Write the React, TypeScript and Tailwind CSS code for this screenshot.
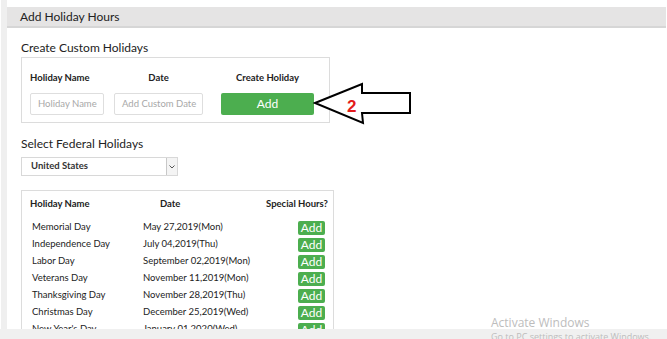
import React from "react";

const font = { fontFamily: "Lato, 'Noto Sans', sans-serif" };

const holidays = [
  { name: "Memorial Day", date: "May 27,2019(Mon)" },
  { name: "Independence Day", date: "July 04,2019(Thu)" },
  { name: "Labor Day", date: "September 02,2019(Mon)" },
  { name: "Veterans Day", date: "November 11,2019(Mon)" },
  { name: "Thanksgiving Day", date: "November 28,2019(Thu)" },
  { name: "Christmas Day", date: "December 25,2019(Wed)" },
  { name: "New Year's Day", date: "January 01,2020(Wed)" },
];

// callout arrow pointing at the Add button
const Arrow = () => (
  <svg width="100" height="44" viewBox="0 0 100 44" className="absolute left-[313px] top-[82px]">
    <path
      d="M2 21 L49 2 L49 11 L97 11 L97 31 L49 31 L50 41 Z"
      fill="white"
      stroke="black"
      strokeWidth="2"
    />
    <text x="34" y="30" fill="#e31b1b" fontSize="17" fontWeight="700" fontFamily="Liberation Sans, Arial, sans-serif">
      2
    </text>
  </svg>
);

export default function App() {
  return (
    <div className="relative w-[667px] h-[339px] overflow-hidden bg-white text-[#222]" style={font}>
      <div className="flex h-[329px]">
        <div className="w-[6px] shrink-0 bg-[#efefef] ml-[1px]" />
        <div className="flex-1 overflow-hidden pt-[7px]">
          <div className="h-[21px] w-[659px] bg-[#e5e4e4] border-b-2 border-[#d6d6d6] flex items-center pl-[13px] pt-[1px] text-[12px]">
            Add Holiday Hours
          </div>

          <div className="pl-[14px]">
            <div className="mt-[12px] text-[12px] leading-[15px]">Create Custom Holidays</div>
            <div className="mt-[2px] w-[309px] h-[66px] border border-[#dcdcdc] pl-[8px] pt-[13px]">
              <div className="flex gap-[10px] text-[9.5px] font-bold text-[#222]">
                <div className="w-[74px]">Holiday Name</div>
                <div className="w-[89px] text-center">Date</div>
                <div className="w-[93px] ml-[8px] text-center">Create Holiday</div>
              </div>
              <div className="flex items-start mt-[8px] gap-[10px]">
                <div className="w-[74px] h-[22px] shrink-0 border border-[#dedede] rounded-[2px] flex items-center pl-[7px] text-[9.5px] text-[#a8a8a8] whitespace-nowrap overflow-hidden">
                  Holiday Name
                </div>
                <div className="w-[89px] h-[22px] shrink-0 border border-[#dedede] rounded-[2px] flex items-center pl-[7px] text-[9.5px] text-[#a8a8a8] whitespace-nowrap overflow-hidden">
                  Add Custom Date
                </div>
                <div className="w-[93px] shrink-0 ml-[8px] h-[22px] bg-[#4cae4f] rounded-[2px] flex items-center justify-center text-white text-[12px]">
                  Add
                </div>
              </div>
            </div>

            <div className="mt-[13px] text-[12px] leading-[15px]">Select Federal Holidays</div>
            <div className="mt-[6px] w-[157px] h-[19px] border border-[#d8d8d8] flex">
              <div className="flex-1 flex items-center pl-[9px] text-[9.5px] font-bold text-[#333]">United States</div>
              <div className="w-[11px] border-l border-[#c8c8c8] bg-[#f4f4f4] flex items-center justify-center">
                <svg width="6" height="4" viewBox="0 0 6 4">
                  <path d="M0.5 0.5 L3 3 L5.5 0.5" fill="none" stroke="#555" strokeWidth="1" />
                </svg>
              </div>
            </div>

            <div className="mt-[14px] w-[313px] border border-[#dcdcdc] pt-[6px] pl-[8px] pr-[5px]">
              <div className="grid grid-cols-[113px_1fr_auto] text-[9.5px] font-bold h-[14px] items-center">
                <div>Holiday Name</div>
                <div className="pl-[17px]">Date</div>
                <div>Special Hours?</div>
              </div>
              <div className="mt-[8px] pl-[2px] pr-[3px]">
                {holidays.map((h) => (
                  <div key={h.name} className="grid grid-cols-[111px_1fr_auto] items-center h-[17px] text-[9.5px]">
                    <div>{h.name}</div>
                    <div>{h.date}</div>
                    <div className="w-[27px] h-[14px] bg-[#4cae4f] rounded-[2px] flex items-center justify-center text-white text-[12px] leading-none">
                      Add
                    </div>
                  </div>
                ))}
              </div>
            </div>
          </div>
        </div>
      </div>
      <div className="h-[10px] bg-[#f0f0f0]" />

      <Arrow />

      <div className="absolute left-[491px] top-[315px] text-[#bdbdbd] pointer-events-none" style={{ fontFamily: "'Open Sans', sans-serif" }}>
        <div className="text-[12px] leading-[16px]">Activate Windows</div>
        <div className="text-[9px] leading-[12px]">Go to PC settings to activate Windows.</div>
      </div>
    </div>
  );
}
